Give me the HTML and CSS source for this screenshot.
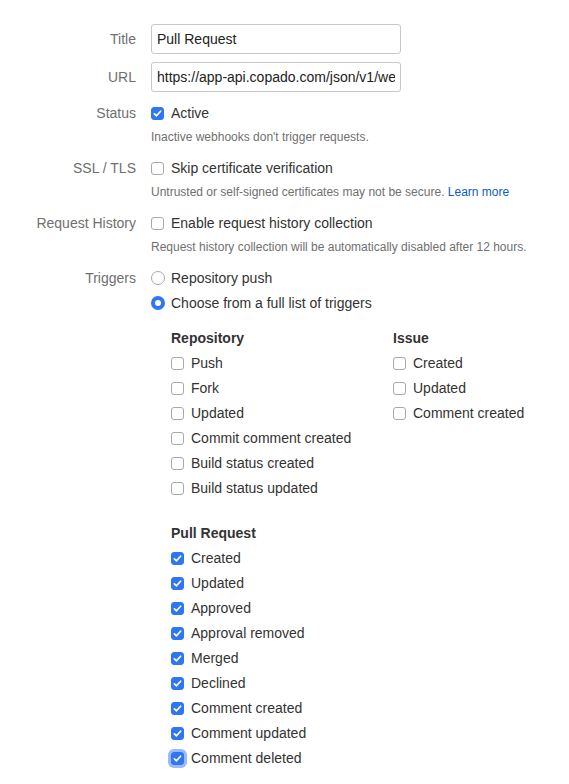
FILE: index.html
```html
<!DOCTYPE html>
<html>
<head>
<meta charset="utf-8">
<link rel="stylesheet" href="styles.css">
</head>
<body>
<form class="form">
  <div class="field field-input">
    <label class="label">Title</label>
    <div class="control"><input class="text" type="text" value="Pull Request"></div>
  </div>
  <div class="field field-input last-input">
    <label class="label">URL</label>
    <div class="control"><input class="text" type="text" value="https://app-api.copado.com/json/v1/webhook/bitbucket"></div>
  </div>
  <div class="field">
    <div class="label">Status</div>
    <div class="control">
      <div class="opt"><span class="cb on"></span>Active</div>
      <div class="hint">Inactive webhooks don't trigger requests.</div>
    </div>
  </div>
  <div class="field">
    <div class="label">SSL / TLS</div>
    <div class="control">
      <div class="opt"><span class="cb"></span>Skip certificate verification</div>
      <div class="hint">Untrusted or self-signed certificates may not be secure. <a class="link" href="#">Learn more</a></div>
    </div>
  </div>
  <div class="field">
    <div class="label">Request History</div>
    <div class="control">
      <div class="opt"><span class="cb"></span>Enable request history collection</div>
      <div class="hint">Request history collection will be automatically disabled after 12 hours.</div>
    </div>
  </div>
  <div class="field">
    <div class="label">Triggers</div>
    <div class="control">
      <div class="opt"><span class="radio"></span>Repository push</div>
      <div class="opt"><span class="radio on"></span>Choose from a full list of triggers</div>
      <div class="groups">
        <div class="group-row">
          <div class="group repo">
            <div class="group-title">Repository</div>
            <div class="opt"><span class="cb"></span>Push</div>
            <div class="opt"><span class="cb"></span>Fork</div>
            <div class="opt"><span class="cb"></span>Updated</div>
            <div class="opt"><span class="cb"></span>Commit comment created</div>
            <div class="opt"><span class="cb"></span>Build status created</div>
            <div class="opt"><span class="cb"></span>Build status updated</div>
          </div>
          <div class="group">
            <div class="group-title">Issue</div>
            <div class="opt"><span class="cb"></span>Created</div>
            <div class="opt"><span class="cb"></span>Updated</div>
            <div class="opt"><span class="cb"></span>Comment created</div>
          </div>
        </div>
        <div class="group pr">
          <div class="group-title">Pull Request</div>
          <div class="opt"><span class="cb on"></span>Created</div>
          <div class="opt"><span class="cb on"></span>Updated</div>
          <div class="opt"><span class="cb on"></span>Approved</div>
          <div class="opt"><span class="cb on"></span>Approval removed</div>
          <div class="opt"><span class="cb on"></span>Merged</div>
          <div class="opt"><span class="cb on"></span>Declined</div>
          <div class="opt"><span class="cb on"></span>Comment created</div>
          <div class="opt"><span class="cb on"></span>Comment updated</div>
          <div class="opt"><span class="cb on focus"></span>Comment deleted</div>
        </div>
      </div>
    </div>
  </div>
</form>
</body>
</html>
```
FILE: styles.css
```css
* { box-sizing: border-box; }
html, body {
  margin: 0;
  padding: 0;
  background: #fff;
}
body {
  font-family: "Liberation Sans", Arial, sans-serif;
  font-size: 14px;
  color: #333;
}
.form {
  padding-top: 24px;
}
.field {
  display: flex;
  align-items: flex-start;
  margin-bottom: 13px;
}
.field-input {
  align-items: center;
  margin-bottom: 8px;
}
.last-input {
  margin-bottom: 11px;
}
.label {
  width: 136px;
  flex: none;
  text-align: right;
  color: #707070;
  line-height: 20px;
  margin-right: 15px;
}
.control {
  flex: 1;
}
.text {
  display: block;
  width: 250px;
  height: 30px;
  border: 1px solid #c8c8c8;
  border-radius: 3px;
  padding: 0 5px;
  font: 14px "Liberation Sans", Arial, sans-serif;
  color: #222;
  background: #fff;
  outline: none;
}
.opt {
  display: flex;
  align-items: center;
  height: 20px;
  line-height: 20px;
  margin-bottom: 5px;
  white-space: nowrap;
}
.opt:last-child { margin-bottom: 0; }
.control > .opt:last-of-type { margin-bottom: 0; }
.hint {
  margin-top: 6px;
  font-size: 12px;
  line-height: 16px;
  color: #707070;
}
.link {
  color: #0b5cc8;
  text-decoration: none;
}
.cb {
  width: 13px;
  height: 13px;
  flex: none;
  border: 1px solid #a9a9a9;
  border-radius: 3px;
  background: #fff;
  margin-right: 7px;
  position: relative;
}
.cb.on {
  border-color: #2f76f3;
  background: #2f76f3 url("data:image/svg+xml;utf8,<svg xmlns='http://www.w3.org/2000/svg' viewBox='0 0 13 13'><path d='M3.4 6.8 L5.5 8.8 L9.6 4.2' fill='none' stroke='white' stroke-width='1.7' stroke-linecap='round' stroke-linejoin='round'/></svg>") center/13px 13px no-repeat;
}
.cb.focus {
  box-shadow: 0 0 0 3px rgba(70, 130, 250, 0.55);
}
.radio {
  width: 14px;
  height: 14px;
  flex: none;
  border: 1px solid #a9a9a9;
  border-radius: 50%;
  background: #fff;
  margin-right: 6px;
}
.radio.on {
  border: 4.5px solid #2f76f3;
  background: #fff;
}
.groups {
  margin-top: 15px;
  padding-left: 20px;
}
.group-row {
  display: flex;
}
.group.repo {
  width: 222px;
}
.group-title {
  font-weight: bold;
  line-height: 20px;
  margin-bottom: 5px;
}
.group.pr {
  margin-top: 25px;
}
.group .opt:last-child { margin-bottom: 0; }
```
